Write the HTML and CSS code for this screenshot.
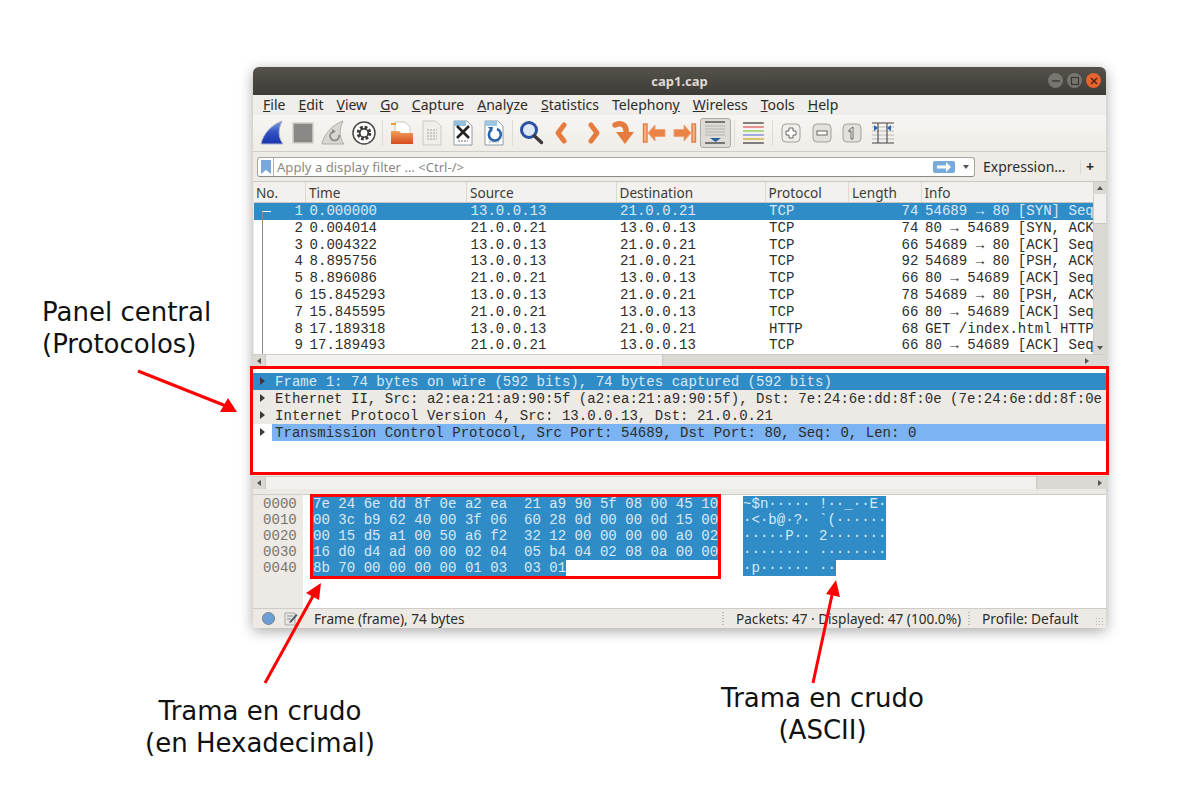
FILE: index.html
```html
<!DOCTYPE html>
<html lang="es">
<head>
  <meta charset="UTF-8">
  <title>cap1.cap</title>
  <link rel="stylesheet" href="styles.css">
</head>
<body>

  <div class="window">
    <div class="titlebar">
      <span class="title">cap1.cap</span>
      <div class="win-buttons">
        <span class="win-btn"><svg width="10" height="10" viewBox="0 0 10 10"><path d="M1 5h8" stroke="#3a3833" stroke-width="1.4"/></svg></span>
        <span class="win-btn"><svg width="10" height="10" viewBox="0 0 10 10"><rect x="1.5" y="1.5" width="7" height="7" fill="none" stroke="#3a3833" stroke-width="1.2"/></svg></span>
        <span class="win-btn close"><svg width="10" height="10" viewBox="0 0 10 10"><path d="M2 2l6 6M8 2l-6 6" stroke="#4a2010" stroke-width="1.4"/></svg></span>
      </div>
    </div>

    <div class="menubar">
      <span><u>F</u>ile</span>
      <span><u>E</u>dit</span>
      <span><u>V</u>iew</span>
      <span><u>G</u>o</span>
      <span><u>C</u>apture</span>
      <span><u>A</u>nalyze</span>
      <span><u>S</u>tatistics</span>
      <span>Telephon<u>y</u></span>
      <span><u>W</u>ireless</span>
      <span><u>T</u>ools</span>
      <span><u>H</u>elp</span>
    </div>

    <div class="toolbar">
      <span class="tool"><svg width="26" height="26" viewBox="0 0 26 26"><defs><linearGradient id="fin" x1="0" y1="0" x2="0" y2="1"><stop offset="0" stop-color="#7f9de0"/><stop offset="0.5" stop-color="#2f4fc0"/><stop offset="1" stop-color="#1a35ac"/></linearGradient></defs><path d="M2 24C4 14 12 5 23 1C19 10 19 17 24 24Z" fill="url(#fin)" stroke="#aab8cc"/></svg></span>
      <span class="tool"><svg width="26" height="26" viewBox="0 0 26 26"><rect x="3" y="3" width="20" height="20" fill="#8b8986" stroke="#d3d0cb" stroke-width="1.5"/></svg></span>
      <span class="tool"><svg width="26" height="26" viewBox="0 0 26 26"><path d="M2 24C4 14 12 5 23 1C19 10 19 17 24 24Z" fill="#dad7d2" stroke="#b0ada8"/><path d="M19 15a4.500 4.500 0 1 1-5-3.500" fill="none" stroke="#8e8b87" stroke-width="1.8"/><path d="M12 9l4 2.500-4 2Z" fill="#8e8b87"/></svg></span>
      <span class="tool"><svg width="26" height="26" viewBox="0 0 26 26"><circle cx="13" cy="13" r="11" fill="#fff" stroke="#4a4946" stroke-width="1.5"/><circle cx="13" cy="13" r="5.5" fill="none" stroke="#3c3b39" stroke-width="3.6" stroke-dasharray="2.6 1.7"/><circle cx="13" cy="13" r="4.3" fill="none" stroke="#3c3b39" stroke-width="1.6"/></svg></span>
      <span class="sep"></span>
      <span class="tool"><svg width="26" height="26" viewBox="0 0 26 26"><defs><linearGradient id="fold" x1="0" y1="0" x2="0" y2="1"><stop offset="0" stop-color="#f1a05c"/><stop offset="1" stop-color="#d64c1c"/></linearGradient></defs><path d="M6 2h10l5 5v7H6Z" fill="#fff" stroke="#c9c6c0"/><path d="M2 3h5v2H2Z" fill="#f09a3c"/><path d="M2 11h8l2 2h12v11H2Z" fill="url(#fold)"/></svg></span>
      <span class="tool"><svg width="26" height="26" viewBox="0 0 26 26"><path d="M4 1h13l5 5v19H4Z" fill="#f1efeb" stroke="#cdcac5"/><path d="M8 10h10M8 13h10M8 16h10M8 19h10" stroke="#bdbab5" stroke-width="1.6" stroke-dasharray="2 1"/></svg></span>
      <span class="tool"><svg width="26" height="26" viewBox="0 0 26 26"><path d="M4 1h13l5 5v19H4Z" fill="#fff" stroke="#8f9aa5"/><path d="M4 1h12v5H4Z" fill="#8fc0e2"/><path d="M7 6l12 12M19 6L7 18" stroke="#222" stroke-width="2.6"/><path d="M8 21h10" stroke="#999" stroke-width="1.5" stroke-dasharray="2 1"/></svg></span>
      <span class="tool"><svg width="26" height="26" viewBox="0 0 26 26"><path d="M4 1h13l5 5v19H4Z" fill="#fff" stroke="#8f9aa5"/><path d="M4 1h12v5H4Z" fill="#9cc8e6"/><path d="M16 9a6 6 0 1 1-6 1" fill="none" stroke="#2a62a8" stroke-width="2.6"/><path d="M7 7l5 0l-1 5Z" fill="#2a62a8"/><path d="M8 22h10" stroke="#999" stroke-dasharray="2 1"/></svg></span>
      <span class="sep"></span>
      <span class="tool"><svg width="26" height="26" viewBox="0 0 26 26"><circle cx="11" cy="10" r="7.5" fill="#dce8f5" stroke="#2a50a0" stroke-width="3"/><path d="M16.5 16l7 6.5" stroke="#3b3a38" stroke-width="3.4" stroke-linecap="round"/></svg></span>
      <span class="tool"><svg width="26" height="26" viewBox="0 0 26 26"><path d="M15 5L9 13l6 8" fill="none" stroke="#e67b3e" stroke-width="5" stroke-linejoin="round" stroke-linecap="round"/></svg></span>
      <span class="tool"><svg width="26" height="26" viewBox="0 0 26 26"><path d="M11 5l6 8-6 8" fill="none" stroke="#e67b3e" stroke-width="5" stroke-linejoin="round" stroke-linecap="round"/></svg></span>
      <span class="tool"><svg width="26" height="26" viewBox="0 0 26 26"><path d="M5 5c7-3 12 0 11 9" fill="none" stroke="#e67b3e" stroke-width="5.500" stroke-linecap="round"/><path d="M6 12h18l-9 12Z" fill="#e67b3e"/></svg></span>
      <span class="tool"><svg width="26" height="26" viewBox="0 0 26 26"><rect x="2.500" y="4" width="3.500" height="18" fill="#f4b68c" stroke="#e67b3e" stroke-width="1.400"/><path d="M7 13l7-8v4.500h10v7H14V21Z" fill="#e98446" stroke="#f0a477"/></svg></span>
      <span class="tool"><svg width="26" height="26" viewBox="0 0 26 26"><rect x="20" y="4" width="3.500" height="18" fill="#f4b68c" stroke="#e67b3e" stroke-width="1.400"/><path d="M19 13l-7-8v4.500H2v7h10V21Z" fill="#e98446" stroke="#f0a477"/></svg></span>
      <span class="tool active"><svg width="26" height="26" viewBox="0 0 26 26"><path d="M3 2h20" stroke="#333" stroke-width="1.2"/><path d="M3 6h20M3 9h20M3 12h20M3 15h20" stroke="#b5b3af"/><path d="M3 23h20" stroke="#333" stroke-width="1.2"/><path d="M8 18h11l-5.500 4Z" fill="#2a5fa5"/></svg></span>
      <span class="sep"></span>
      <span class="tool"><svg width="26" height="26" viewBox="0 0 26 26"><path d="M3 3h21" stroke="#333" stroke-width="1.2"/><path d="M3 7h21" stroke="#d9534f" stroke-width="1.2"/><path d="M3 11h21" stroke="#9ed36a" stroke-width="1.6"/><path d="M3 15h21" stroke="#6a7fd0" stroke-width="1.2"/><path d="M3 19h21" stroke="#caa21c" stroke-width="1.2"/><path d="M3 23h21" stroke="#333" stroke-width="1.2"/></svg></span>
      <span class="sep"></span>
      <span class="tool"><svg width="22" height="22" viewBox="0 0 22 22"><rect x="2" y="2" width="18" height="18" rx="4" fill="#f1efec" stroke="#a3a09b"/><path d="M9 6h4v3h3v4h-3v3H9v-3H6V9h3Z" fill="#fff" stroke="#66645f"/></svg></span>
      <span class="tool"><svg width="22" height="22" viewBox="0 0 22 22"><rect x="2" y="2" width="18" height="18" rx="4" fill="#e4e1dd" stroke="#a3a09b"/><rect x="6" y="9" width="10" height="4" fill="#fff" stroke="#66645f"/></svg></span>
      <span class="tool"><svg width="22" height="22" viewBox="0 0 22 22"><rect x="2" y="2" width="18" height="18" rx="4" fill="#e4e1dd" stroke="#a3a09b"/><path d="M8 8l4-3v12h-2V8.500L8 10Z" fill="#fff" stroke="#66645f"/></svg></span>
      <span class="tool"><svg width="24" height="26" viewBox="0 0 24 26"><path d="M1 3h22M1 23h22" stroke="#444" stroke-width="1.2"/><path d="M1 7h22M1 11h22M1 15h22M1 19h22" stroke="#bcbab6"/><path d="M7 3v20M16 3v20" stroke="#555" stroke-width="1.200"/><path d="M3 5l4 3-4 3ZM20 5l-4 3 4 3Z" fill="#2a64b0"/></svg></span>
    </div>

    <div class="filterbar">
      <div class="filter-box">
        <span class="bookmark"><svg width="10" height="14" viewBox="0 0 10 14"><path d="M0 0h10v14L5 10 0 14Z" fill="#79a9dc"/></svg></span>
        <span class="filter-text">Apply a display filter … &lt;Ctrl-/&gt;</span>
        <span class="apply"><svg width="16" height="10" viewBox="0 0 16 10"><path d="M1 3.500h9V0l5 5-5 5V6.500H1Z" fill="#fff"/></svg></span>
        <span class="dropdown"></span>
      </div>
      <span class="expr">Expression…</span>
      <span class="plus">+</span>
    </div>

    <div class="packets">
      <div class="packet-main">
        <div class="packet-list">
          <div class="pk-row pk-head">
            <span>No.</span><span>Time</span><span>Source</span><span>Destination</span><span>Protocol</span><span>Length</span><span>Info</span>
          </div>
          <div class="pk-row sel"><span class="num">1</span><span>0.000000</span><span>13.0.0.13</span><span>21.0.0.21</span><span>TCP</span><span class="num">74</span><span>54689 → 80 [SYN] Seq</span></div>
          <div class="pk-row"><span class="num">2</span><span>0.004014</span><span>21.0.0.21</span><span>13.0.0.13</span><span>TCP</span><span class="num">74</span><span>80 → 54689 [SYN, ACK</span></div>
          <div class="pk-row"><span class="num">3</span><span>0.004322</span><span>13.0.0.13</span><span>21.0.0.21</span><span>TCP</span><span class="num">66</span><span>54689 → 80 [ACK] Seq</span></div>
          <div class="pk-row"><span class="num">4</span><span>8.895756</span><span>13.0.0.13</span><span>21.0.0.21</span><span>TCP</span><span class="num">92</span><span>54689 → 80 [PSH, ACK</span></div>
          <div class="pk-row"><span class="num">5</span><span>8.896086</span><span>21.0.0.21</span><span>13.0.0.13</span><span>TCP</span><span class="num">66</span><span>80 → 54689 [ACK] Seq</span></div>
          <div class="pk-row"><span class="num">6</span><span>15.845293</span><span>13.0.0.13</span><span>21.0.0.21</span><span>TCP</span><span class="num">78</span><span>54689 → 80 [PSH, ACK</span></div>
          <div class="pk-row"><span class="num">7</span><span>15.845595</span><span>21.0.0.21</span><span>13.0.0.13</span><span>TCP</span><span class="num">66</span><span>80 → 54689 [ACK] Seq</span></div>
          <div class="pk-row"><span class="num">8</span><span>17.189318</span><span>13.0.0.13</span><span>21.0.0.21</span><span>HTTP</span><span class="num">68</span><span>GET /index.html HTTP</span></div>
          <div class="pk-row"><span class="num">9</span><span>17.189493</span><span>21.0.0.21</span><span>13.0.0.13</span><span>TCP</span><span class="num">66</span><span>80 → 54689 [ACK] Seq</span></div>
          <span class="conv-line"></span>
        </div>
        <div class="vscroll">
          <span class="arrow up"></span>
          <span class="v-thumb"></span>
          <span class="arrow down"></span>
        </div>
      </div>
      <div class="hscroll">
        <span class="arrow left"></span>
        <span class="h-thumb one"></span>
        <span class="arrow right"></span>
      </div>
    </div>

    <div class="details">
      <div class="tree-row sel"><span class="tri"></span><span>Frame 1: 74 bytes on wire (592 bits), 74 bytes captured (592 bits)</span></div>
      <div class="tree-row grey"><span class="tri"></span><span>Ethernet II, Src: a2:ea:21:a9:90:5f (a2:ea:21:a9:90:5f), Dst: 7e:24:6e:dd:8f:0e (7e:24:6e:dd:8f:0e</span></div>
      <div class="tree-row grey"><span class="tri"></span><span>Internet Protocol Version 4, Src: 13.0.0.13, Dst: 21.0.0.21</span></div>
      <div class="tree-row"><span class="tri"></span><span class="hl">Transmission Control Protocol, Src Port: 54689, Dst Port: 80, Seq: 0, Len: 0</span></div>
    </div>
    <div class="hscroll second">
      <span class="arrow left"></span>
      <span class="h-thumb two"></span>
      <span class="arrow right"></span>
    </div>

    <div class="bytes">
      <div class="offsets">
        <div>0000</div><div>0010</div><div>0020</div><div>0030</div><div>0040</div>
      </div>
      <div class="hex">
        <div><span class="mark">7e 24 6e dd 8f 0e a2 ea  21 a9 90 5f 08 00 45 10</span></div>
        <div><span class="mark">00 3c b9 62 40 00 3f 06  60 28 0d 00 00 0d 15 00</span></div>
        <div><span class="mark">00 15 d5 a1 00 50 a6 f2  32 12 00 00 00 00 a0 02</span></div>
        <div><span class="mark">16 d0 d4 ad 00 00 02 04  05 b4 04 02 08 0a 00 00</span></div>
        <div><span class="mark">8b 70 00 00 00 00 01 03  03 01</span></div>
      </div>
      <div class="ascii">
        <div><span class="mark">~$n····· !··_··E·</span></div>
        <div><span class="mark">·&lt;·b@·?· `(······</span></div>
        <div><span class="mark">·····P·· 2·······</span></div>
        <div><span class="mark">········ ········</span></div>
        <div><span class="mark">·p······ ··</span></div>
      </div>
    </div>

    <div class="statusbar">
      <span class="led"></span>
      <span class="note"><svg width="16" height="16" viewBox="0 0 16 16"><path d="M2 2h10v12H2Z" fill="#e9e7e3" stroke="#a9a7a3"/><path d="M4 5h6M4 8h4" stroke="#8a8a8a"/><path d="M7 10l6-7 1.500 1.200-6 7L6 12Z" fill="#4a5a68"/></svg></span>
      <span class="st-frame">Frame (frame), 74 bytes</span>
      <span class="grip"></span>
      <span class="st-packets">Packets: 47 · Displayed: 47 (100.0%)</span>
      <span class="grip"></span>
      <span class="st-profile">Profile: Default</span>
      <span class="corner"></span>
    </div>
  </div>

  <!-- anotaciones sobre la captura -->
  <div class="box box-details"></div>
  <div class="box box-hex"></div>

  <svg class="arrows" width="1185" height="788" viewBox="0 0 1185 788">
    <path d="M138 371L226 406" stroke="#f00" stroke-width="3"/>
    <path d="M237 412L220 412L228 398Z" fill="#f00"/>
    <path d="M265 683L313 596" stroke="#f00" stroke-width="3"/>
    <path d="M321 583L319 600L306 593Z" fill="#f00"/>
    <path d="M813 683L832 595" stroke="#f00" stroke-width="3"/>
    <path d="M836 580L840 597L826 594Z" fill="#f00"/>
  </svg>

  <div class="note-text n-panel">Panel central<br>(Protocolos)</div>
  <div class="note-text n-hex">Trama en crudo<br>(en Hexadecimal)</div>
  <div class="note-text n-ascii">Trama en crudo<br>(ASCII)</div>

</body>
</html>
```

FILE: styles.css
```css
html, body {
  margin: 0;
  padding: 0;
  height: 788px;
  overflow: hidden;
  background: #ffffff;
}
body {
  position: relative;
  font-family: "Noto Sans", sans-serif;
  color: #3c3b37;
}
.window {
  width: 853px;
  height: 561px;
  margin: 67px 0 0 253px;
  display: flex;
  flex-direction: column;
  background: #edeae6;
  border-radius: 6px 6px 0 0;
  box-shadow: 0 3px 14px rgba(0, 0, 0, 0.35);
}

/* barra de titulo */
.titlebar {
  height: 28px;
  flex: none;
  position: relative;
  display: flex;
  align-items: center;
  justify-content: center;
  background: linear-gradient(to bottom, #55524b, #3e3c37);
  border-radius: 6px 6px 0 0;
}
.title {
  font-size: 13px;
  font-weight: 700;
  color: #dfdbd2;
}
.win-buttons {
  position: absolute;
  right: 5px;
  top: 6px;
  display: flex;
  gap: 4px;
}
.win-btn {
  width: 15px;
  height: 15px;
  border-radius: 50%;
  background: #77756f;
  display: flex;
  align-items: center;
  justify-content: center;
}
.win-btn.close {
  background: #e9632f;
}

/* menu */
.menubar {
  height: 20px;
  flex: none;
  display: flex;
  align-items: center;
  gap: 13px;
  padding: 0 0 2px 10px;
  box-sizing: border-box;
  background: #f0eeea;
  font-size: 14px;
  color: #2c2b28;
}

/* iconos */
.toolbar {
  height: 37px;
  flex: none;
  display: flex;
  align-items: center;
  padding-left: 3.5px;
  background: linear-gradient(to bottom, #f7f5f2, #f0ede8);
  border-bottom: 1px solid #d0cdc8;
  box-sizing: border-box;
}
.tool {
  width: 30.7px;
  height: 30px;
  display: flex;
  align-items: center;
  justify-content: center;
  flex: none;
  box-sizing: border-box;
}
.tool.active {
  background: #dedbd6;
  border: 1px solid #aeaba6;
  border-radius: 3px;
}
.sep {
  width: 7px;
  height: 26px;
  flex: none;
  position: relative;
}
.sep::after {
  content: "";
  position: absolute;
  left: 3px;
  top: 0;
  bottom: 0;
  border-left: 1px solid #dedbd6;
}

/* filtro */
.filterbar {
  height: 30px;
  flex: none;
  display: flex;
  align-items: center;
  padding-left: 4px;
  background: #efece8;
  border-bottom: 1px solid #c9c6c1;
  box-sizing: border-box;
}
.filter-box {
  width: 718px;
  height: 20px;
  flex: none;
  box-sizing: border-box;
  display: flex;
  align-items: center;
  background: #fff;
  border: 1px solid #a9a6a1;
  border-bottom-color: #8d8a86;
  border-radius: 3px;
}
.bookmark {
  width: 16px;
  height: 18px;
  flex: none;
  display: flex;
  align-items: center;
  justify-content: center;
  border-right: 1px solid #b5b2ad;
  box-sizing: border-box;
}
.filter-text {
  flex: 1;
  padding-left: 3px;
  font-size: 13.1px;
  color: #8a8884;
}
.apply {
  width: 22px;
  height: 12px;
  background: #78aadb;
  border-radius: 2px;
  display: flex;
  align-items: center;
  justify-content: center;
  margin-right: 8px;
}
.dropdown {
  width: 0;
  height: 0;
  margin-right: 5px;
  border-left: 3px solid transparent;
  border-right: 3px solid transparent;
  border-top: 4px solid #55534f;
}
.expr {
  font-size: 14px;
  color: #2c2b28;
  margin-left: 8px;
  width: 92px;
  flex: none;
}
.plus {
  font-size: 14px;
  font-weight: 700;
  margin-left: 5px;
  color: #2c2b28;
  padding-left: 5px;
  border-left: 1px solid #dedbd6;
  line-height: 14px;
}

/* lista de paquetes */
.packets {
  height: 184px;
  flex: none;
  display: flex;
  flex-direction: column;
}
.packet-main {
  flex: 1;
  display: flex;
  min-height: 0;
}
.packet-list {
  position: relative;
  flex: 1;
  margin-left: 1px;
  background: #fff;
  overflow: hidden;
  font-family: "Liberation Mono", monospace;
  font-size: 14.07px;
  color: #2d2d2b;
}
.pk-row {
  display: grid;
  grid-template-columns: 52px 161px 149.500px 149px 83.500px 72.500px 171px;
  height: 16.800px;
  line-height: 16.800px;
  white-space: nowrap;
}
.pk-row > span {
  padding-left: 3.500px;
  overflow: hidden;
}
.pk-row > .num {
  text-align: right;
  padding: 0 3px 0 0;
}
.pk-head {
  height: 21px;
  line-height: 22px;
  background: #f3f1ed;
  border-bottom: 1px solid #c9c6c1;
  box-sizing: border-box;
  font-family: "Noto Sans", sans-serif;
  font-size: 13.6px;
  color: #3c3b37;
}
.pk-head > span {
  padding-left: 3px;
  border-right: 1px solid #dcd9d4;
}
.pk-head > span:first-child {
  padding-left: 2px;
}
.pk-head > span:last-child {
  border-right: 0;
}
.pk-row.sel {
  background: #308cc6;
  color: #d8e9f5;
}
.conv-line {
  position: absolute;
  left: 7.500px;
  top: 29px;
  bottom: 0;
  width: 8px;
  border-left: 1px solid #8c8b88;
  border-top: 1px solid #fff;
}
.vscroll {
  width: 13px;
  flex: none;
  display: flex;
  flex-direction: column;
  align-items: center;
  background: #dcd9d4;
  border-left: 1px solid #d0cdc8;
  box-sizing: border-box;
}
.v-thumb {
  width: 100%;
  height: 29px;
  background: #f3f1ed;
  border-bottom: 1px solid #c9c6c1;
  margin-bottom: auto;
}
.arrow {
  flex: none;
  width: 0;
  height: 0;
  margin: 4px;
  border: 3px solid transparent;
}
.arrow.up {
  border-top-width: 0;
  border-bottom: 4px solid #55534f;
}
.arrow.down {
  border-bottom-width: 0;
  border-top: 4px solid #55534f;
}
.arrow.left {
  border-left-width: 0;
  border-right: 4px solid #55534f;
}
.arrow.right {
  border-right-width: 0;
  border-left: 4px solid #55534f;
}
.hscroll {
  height: 12px;
  flex: none;
  display: flex;
  align-items: center;
  background: #dcd9d4;
  border-top: 1px solid #d0cdc8;
  box-sizing: border-box;
  padding-right: 13px;
}
.h-thumb {
  height: 100%;
  background: #f3f1ed;
  border-right: 1px solid #c9c6c1;
  border-left: 1px solid #c9c6c1;
  box-sizing: border-box;
}
.h-thumb.one {
  width: 398px;
  margin-right: auto;
}
.h-thumb.two {
  width: 772px;
  margin-right: auto;
}
.hscroll.second {
  height: 13px;
  padding-right: 0;
  margin-top: 3px;
  margin-bottom: 5px;
}

/* detalle de protocolos */
.details {
  height: 105px;
  flex: none;
  box-sizing: border-box;
  margin-top: 2px;
  padding-top: 5px;
  background: #fff;
  font-family: "Liberation Mono", monospace;
  font-size: 14.07px;
  color: #2d2d2b;
}
.tree-row {
  height: 16.900px;
  line-height: 18.500px;
  display: flex;
  white-space: nowrap;
  overflow: hidden;
}
.tri {
  width: 19px;
  flex: none;
  position: relative;
}
.tri::after {
  content: "";
  position: absolute;
  left: 7px;
  top: 4px;
  border-left: 5px solid #3a3a38;
  border-top: 4px solid transparent;
  border-bottom: 4px solid transparent;
}
.tree-row > span:last-child {
  padding-left: 3px;
  flex: 1;
}
.tree-row.sel {
  background: #308cc6;
  color: #d8e9f5;
}
.tree-row.grey {
  background: #edeae6;
}
.tree-row .hl {
  background: #7cb3f3;
}

/* bytes */
.bytes {
  flex: 1;
  min-height: 0;
  display: flex;
  background: #fff;
  font-family: "Liberation Mono", monospace;
  font-size: 14.07px;
  line-height: 16px;
  border-top: 1px solid #d0cdc8;
}
.offsets {
  width: 50px;
  flex: none;
  padding: 1px 0 0 10px;
  box-sizing: border-box;
  background: #edeae6;
  color: #777571;
}
.hex {
  width: 440px;
  flex: none;
  padding: 1px 0 0 10px;
  box-sizing: border-box;
}
.ascii {
  flex: 1;
  padding-top: 1px;
}
.offsets > div,
.mark {
  position: relative;
}
.mark {
  display: inline-block;
  white-space: pre;
  background: #308cc6;
  color: #d8e9f5;
  line-height: 17px;
  height: 16px;
  vertical-align: top;
}
.offsets > div {
  line-height: 17px;
  height: 16px;
}

/* barra de estado */
.statusbar {
  height: 20px;
  flex: none;
  display: flex;
  align-items: center;
  background: #edeae6;
  border-top: 1px solid #d0cdc8;
  box-sizing: border-box;
  font-size: 13.6px;
  color: #2c2b28;
  position: relative;
}
.led {
  width: 13px;
  height: 13px;
  margin-left: 9px;
  border-radius: 50%;
  background: #6d9fd6;
  border: 1px solid #77808c;
  box-sizing: border-box;
  flex: none;
}
.note {
  width: 16px;
  height: 16px;
  margin-left: 8px;
  flex: none;
}
.st-frame {
  margin-left: 15px;
  width: 408px;
  flex: none;
}
.grip {
  width: 2px;
  height: 14px;
  flex: none;
  background: repeating-linear-gradient(to bottom, #bdbab5 0 1px, transparent 1px 3px);
}
.st-packets {
  margin-left: 12px;
  width: 232px;
  flex: none;
}
.st-profile {
  margin-left: 12px;
  font-size: 13.8px;
}
.corner {
  position: absolute;
  right: 1px;
  bottom: 1px;
  width: 10px;
  height: 10px;
  background: radial-gradient(#bdbab5 35%, transparent 40%) 0 0 / 3px 3px;
}

/* recuadros rojos y notas */
.box {
  position: absolute;
  border: 3px solid #f00;
  box-sizing: border-box;
}
.box-details {
  left: 250px;
  top: 366px;
  width: 859px;
  height: 109px;
}
.box-hex {
  left: 310px;
  top: 494px;
  width: 411px;
  height: 85px;
}
.arrows {
  position: absolute;
  left: 0;
  top: 0;
}
.note-text {
  position: absolute;
  font-family: "DejaVu Sans", sans-serif;
  font-size: 26px;
  line-height: 32px;
  color: #111;
  white-space: nowrap;
}
.n-panel {
  left: 42px;
  top: 296px;
}
.n-hex {
  left: 145px;
  top: 695px;
  width: 230px;
  text-align: center;
}
.n-ascii {
  left: 721px;
  top: 682px;
  width: 203px;
  text-align: center;
}
```
